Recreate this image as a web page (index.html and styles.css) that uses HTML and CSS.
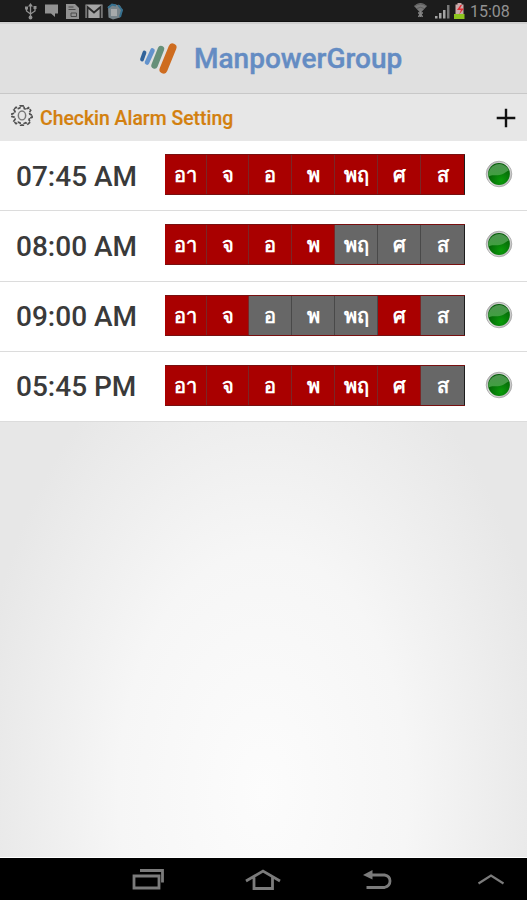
FILE: index.html
```html
<!DOCTYPE html>
<html lang="th">
<head>
	<meta charset="UTF-8">
	<meta name="viewport" content="width=device-width, initial-scale=1.0">
	<title>Checkin Alarm Setting</title>
	<link rel="stylesheet" href="styles.css">
</head>
<body>
	<!-- shared status light -->
	<svg class="defs" width="0" height="0">
		<defs>
			<linearGradient id="rim" x1="0" y1="0" x2="1" y2="1">
				<stop offset="0" stop-color="#aaa"/>
				<stop offset=".5" stop-color="#e4e4e4"/>
				<stop offset="1" stop-color="#aaa"/>
			</linearGradient>
			<radialGradient id="green" cx=".6" cy=".8" r=".7">
				<stop offset="0" stop-color="#0a9c0a"/>
				<stop offset="1" stop-color="#045c08"/>
			</radialGradient>
			<linearGradient id="gloss" x1="0" y1="0" x2="0" y2="1">
				<stop offset="0" stop-color="#4d9450"/>
				<stop offset="1" stop-color="#3fa03f"/>
			</linearGradient>
			<symbol id="light" viewBox="0 0 28 28">
				<circle cx="14" cy="14" r="12.8" fill="url(#rim)" stroke="#a5a5a5" stroke-width=".8"/>
				<circle cx="14" cy="14" r="10.9" fill="url(#green)"/>
				<path d="M3.4 16.5A10.9 10.9 0 0 1 24 10.2C20 12 19 14.8 12.500 15.300C8.500 15.500 5.500 15 3.400 16.500Z" fill="url(#gloss)"/>
			</symbol>
		</defs>
	</svg>

	<div class="statusbar">
		<svg width="110" height="22" viewBox="0 0 110 22">
			<g fill="none" stroke="#929292" stroke-width="1.3">
				<path d="M10.500 5V17M6.500 8V11L10.500 14L15 11V8"/>
			</g>
			<g fill="#929292">
				<path d="M10.500 3L13 6.500H8zM5 6.500h3v3H5zM13.500 6h3v3h-3z"/>
				<circle cx="10.500" cy="17.500" r="1.900"/>
				<path d="M25 4.500h13v9h-3v3.500l-4-3.500h-6z"/>
				<path d="M46 4h9l4 4v11H46z"/>
			</g>
			<path d="M48.500 7h5M48.500 9.500h7M51 13h5.500v3.500H51z" fill="none" stroke="#4a4a4a"/>
			<path d="M65.500 4.500h17v13.500h-17z" fill="#a5a5a5"/>
			<path d="M67.500 18V7L74 12.500L80.500 7V18" fill="none" stroke="#2b2b2b" stroke-width="1.800"/>
			<path d="M88 6.500l5-2.500 7 1.500 2.500 5-2.500 7-7 2-4.500-2z" fill="#79858b"/>
			<path d="M88 8l4-3.500 4 1M98 5l4 5-2 7" fill="none" stroke="#35708f" stroke-width="2"/>
			<path d="M91 9h6v7h-6z" fill="#a7aaab"/>
		</svg>
		<svg class="signal" width="56" height="22" viewBox="0 0 56 22">
			<path d="M1 6Q7.500 0 14 6L7.500 13z" fill="#777"/>
			<path d="M2 6Q7.500 2 13 6M4 8.500Q7.500 6 11 8.500" fill="none" stroke="#555" stroke-width=".8"/>
			<path d="M5 13h5M7.500 11v6M5.500 17l2-4 2 4" fill="none" stroke="#858585" stroke-width="1.400"/>
			<path d="M22 16h2.500v2.500H22zM26 13h2.500v5.500H26zM30 10h2.500v8.500H30z" fill="#a4a4a4"/>
			<path d="M34 5h2.500v13.500H34z" fill="#777"/>
			<path d="M42.500 4.500h2V3h4v1.500h2V14h-8z" fill="#c9aaaa"/>
			<path d="M41 14h10.500v5H41z" fill="#8cc41e"/>
			<path d="M47.500 5L44 10h4l-2 4.500 5-6h-4l2-3.500z" fill="#e02b32"/>
		</svg>
		<span class="clock">15:08</span>
	</div>

	<div class="header">
		<svg width="42" height="38" viewBox="0 0 42 38" fill="none" stroke-linecap="round">
			<path d="M6.500 12.500L4 19.500" stroke="#31639a" stroke-width="3.800"/>
			<path d="M14.500 10.500L9 22.500" stroke="#6393cd" stroke-width="4.600"/>
			<path d="M23 9L16.500 25.500" stroke="#669079" stroke-width="6.400"/>
			<path d="M34.500 7.500L25.500 29.500" stroke="#ce6c1f" stroke-width="8"/>
		</svg>
		<h1>ManpowerGroup</h1>
	</div>

	<div class="titlebar">
		<svg class="gear" width="22" height="22" viewBox="0 0 24 24" fill="none" stroke="#505050">
			<path d="M10 2h4l.5 3 2 .8L19 4l2.500 3-1.500 2.200.7 2 2.300.8v2.500l-2.600.8-.8 2 1.400 2.300-2.700 2.400-2.300-1.600-2 .9L13.500 23h-3l-.6-2.300-2-.8L5.500 21.500 3 18.800l1.500-2.300-.8-2L1 13.800v-3l2.600-.7.8-2L3 6l2.500-2.500L8 5l1.700-.7z" stroke-width="1.800" stroke-dasharray="4 .8"/>
			<ellipse cx="12" cy="12.500" rx="4" ry="4.800" stroke="#777" stroke-width="1.600"/>
		</svg>
		<h2>Checkin Alarm Setting</h2>
		<svg class="add" width="20" height="20" viewBox="0 0 20 20">
			<path d="M10 .7V19.300M.7 10H19.300" stroke="#111" stroke-width="2.400"/>
		</svg>
	</div>

	<div class="alarms">
		<div class="alarm">
			<span class="time">07:45 AM</span>
			<div class="days">
				<span class="on">อา</span><span class="on">จ</span><span class="on">อ</span><span class="on">พ</span><span class="on">พฤ</span><span class="on">ศ</span><span class="on">ส</span>
			</div>
			<svg class="light"><use href="#light"/></svg>
		</div>
		<div class="alarm">
			<span class="time">08:00 AM</span>
			<div class="days">
				<span class="on">อา</span><span class="on">จ</span><span class="on">อ</span><span class="on">พ</span><span>พฤ</span><span>ศ</span><span>ส</span>
			</div>
			<svg class="light"><use href="#light"/></svg>
		</div>
		<div class="alarm">
			<span class="time">09:00 AM</span>
			<div class="days">
				<span class="on">อา</span><span class="on">จ</span><span>อ</span><span>พ</span><span>พฤ</span><span class="on">ศ</span><span>ส</span>
			</div>
			<svg class="light"><use href="#light"/></svg>
		</div>
		<div class="alarm">
			<span class="time">05:45 PM</span>
			<div class="days">
				<span class="on">อา</span><span class="on">จ</span><span class="on">อ</span><span class="on">พ</span><span class="on">พฤ</span><span class="on">ศ</span><span>ส</span>
			</div>
			<svg class="light"><use href="#light"/></svg>
		</div>
	</div>

	<div class="empty"></div>

	<div class="navbar">
		<svg width="34" height="24" viewBox="0 0 34 24"><path d="M2 9h25v12H2zM8 3.500h22.500v12" stroke-width="2.800"/></svg>
		<svg width="36" height="24" viewBox="0 0 36 24"><path d="M1 14L18 4L35 14M9 10.500V21.500H27.500V10.500" stroke-width="2.800"/></svg>
		<svg width="30" height="24" viewBox="0 0 30 24"><path d="M7 8H21.500Q27 9 27 14Q27 19 21.500 20.500H3.500" stroke-width="2.800"/><path class="head" d="M0 8L9.500 3V12.500z"/></svg>
		<svg width="28" height="24" viewBox="0 0 28 24"><path d="M1.500 16.500L14 8.500L26.500 16.500" stroke-width="2.200"/></svg>
	</div>
</body>
</html>
```
FILE: styles.css
```css
* {
  box-sizing: border-box;
}

body {
  margin: 0;
  height: 900px;
  display: flex;
  flex-direction: column;
  overflow: hidden;
  font-family: Roboto, "Noto Sans", sans-serif;
  background: #e8e8e8;
}

h1, h2 {
  margin: 0;
}

svg {
  display: block;
  flex: none;
}

.defs {
  position: absolute;
}

.statusbar {
  height: 22px;
  flex: none;
  display: flex;
  align-items: center;
  padding: 0 18px 0 20px;
  background: #1c1c1c;
  border-bottom: 1px solid #111;
}

.signal {
  margin-left: auto;
}

.clock {
  width: 40px;
  font-size: 16px;
  line-height: 22px;
  padding: 2px 0 0 1px;
  color: #929292;
}

.header {
  height: 72px;
  flex: none;
  display: flex;
  align-items: center;
  padding-left: 138px;
  background: #e0e0e0;
  border-top: 2px solid #cfcfcf;
  border-bottom: 1px solid #c8c8c8;
}

.header h1 {
  margin-left: 14px;
  font-size: 28px;
  font-weight: 500;
  line-height: 32px;
  color: #648cc3;
  -webkit-text-stroke: .4px #648cc3;
}

.titlebar {
  height: 47px;
  flex: none;
  display: flex;
  align-items: center;
  padding: 1px 11px 0;
  background: #e7e7e7;
}

.gear {
  margin-bottom: 6px;
}

.titlebar h2 {
  margin: 1px 0 0 7px;
  font-size: 19.4px;
  font-weight: 500;
  color: #d3800f;
  -webkit-text-stroke: .2px #d3800f;
}

.add {
  margin-left: auto;
}

.alarms {
  height: 281px;
  flex: none;
  display: grid;
  grid-template-rows: repeat(4, 1fr);
  background: #fff;
}

.alarm {
  display: flex;
  align-items: center;
  padding-left: 16px;
  border-bottom: 1px solid #dcdcdc;
}

.time {
  width: 149px;
  padding-top: 1px;
  font-size: 28px;
  font-weight: 500;
  color: #3a3a3a;
}

.days {
  width: 300px;
  height: 41px;
  display: grid;
  grid-template-columns: 42px 42px 43px 43px 43px 43px 44px;
  grid-template-rows: 39px;
  border: solid #781010;
  border-width: 1px 0;
  margin-bottom: 2px;
}

.days span {
  background: #676767;
  border-right: 1px solid #494949;
  color: #fff;
  font-size: 20px;
  font-weight: bold;
  line-height: 41px;
  text-align: center;
}

.days .on {
  background: #a90000;
  border-right-color: #7b2626;
}

.days span:last-child {
  border-right-color: #1c1c1c;
}

.light {
  width: 28px;
  height: 28px;
  margin: 0 0 3px 20px;
}

.empty {
  flex: 1;
  background: radial-gradient(ellipse 290px 480px at 50% 85%, #fcfcfc 0%, #f6f6f6 50%, #e7e7e7 100%);
  border-bottom: 1px solid #fff;
}

.navbar {
  height: 42px;
  flex: none;
  display: flex;
  padding: 9px 0 0 132px;
  background: #000;
}

.navbar svg {
  fill: none;
  stroke: #7b7b7b;
}

.navbar svg:nth-child(2) {
  margin-left: 79px;
}

.navbar svg:nth-child(3) {
  margin-left: 82px;
}

.navbar svg:nth-child(4) {
  margin-left: 84px;
}

.navbar .head {
  fill: #7b7b7b;
  stroke: none;
}
```
